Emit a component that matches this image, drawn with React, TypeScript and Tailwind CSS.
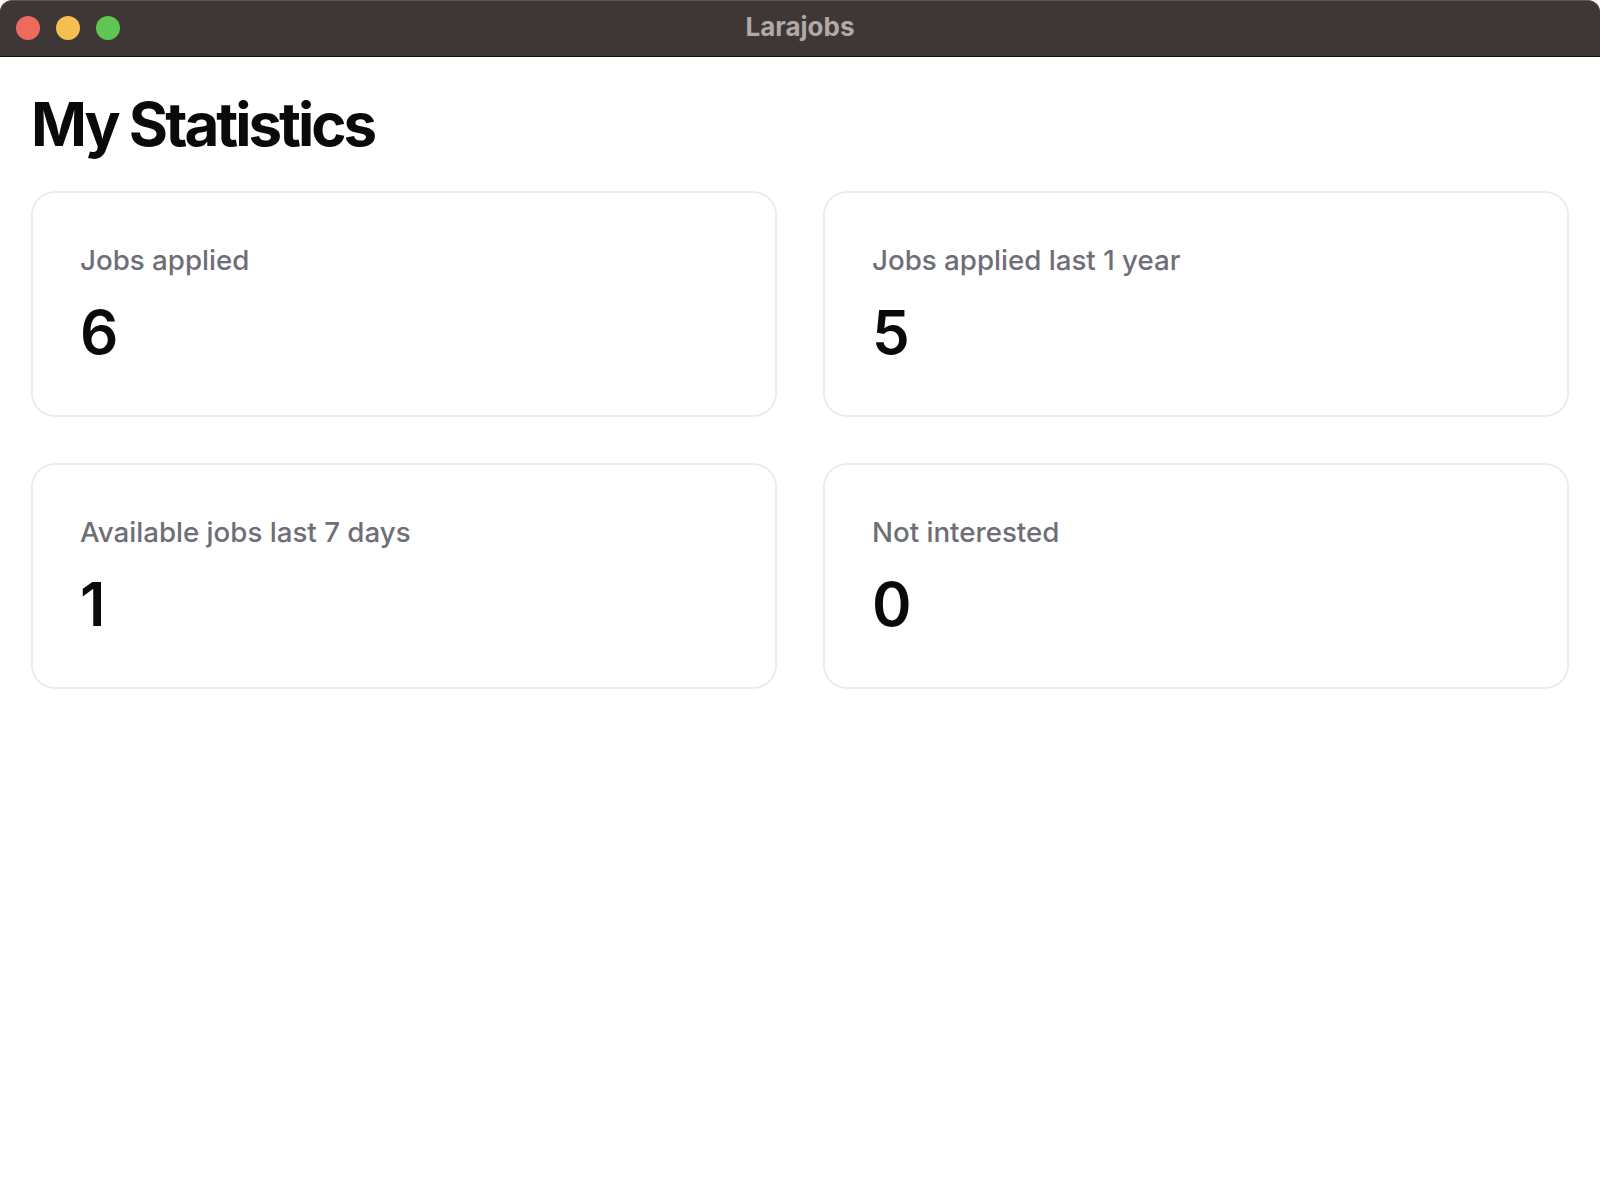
function StatCard({ label, value }: { label: string; value: string }) {
  return (
    <div className="rounded-[24px] border-2 border-[#ececec] bg-white px-[47px] pt-[48px] pb-[47px]">
      <p className="text-[27.7px] font-medium leading-[39px] text-[#6e6e77]">{label}</p>
      <p className="mt-[16px] text-[60px] font-semibold leading-[72px] text-[#0a0a0a]">
        {value}
      </p>
    </div>
  );
}

export default function App() {
  const stats = [
    { label: "Jobs applied", value: "6" },
    { label: "Jobs applied last 1 year", value: "5" },
    { label: "Available jobs last 7 days", value: "1" },
    { label: "Not interested", value: "0" },
  ];

  return (
    <div
      className="min-h-[1200px] bg-white"
      style={{ fontFamily: "Inter, 'Noto Sans', sans-serif" }}
    >
      {/* title bar */}
      <div className="relative flex h-[57px] items-center rounded-t-[12px] border-t border-b border-t-[#5d5553] border-b-[#111] bg-[#3f3735]">
        <div className="-mt-[1px] flex gap-[16px] pl-[16px]">
          <span className="h-[24px] w-[24px] rounded-full bg-[#ee6a5f]" />
          <span className="h-[24px] w-[24px] rounded-full bg-[#f5bf4f]" />
          <span className="h-[24px] w-[24px] rounded-full bg-[#61c554]" />
        </div>
        <div className="pointer-events-none absolute inset-x-0 top-[8px] text-center text-[26px] font-bold leading-[36px] text-[#b1a8a7]">
          Larajobs
        </div>
      </div>

      <div className="p-[31px]">
        <h1 className="text-[60px] font-bold leading-[72px] tracking-[-0.05em] text-[#0a0a0a]">
          My Statistics
        </h1>
        <div className="mt-[31px] grid grid-cols-2 gap-[46px]">
          {stats.map((s) => (
            <StatCard key={s.label} label={s.label} value={s.value} />
          ))}
        </div>
      </div>
    </div>
  );
}
